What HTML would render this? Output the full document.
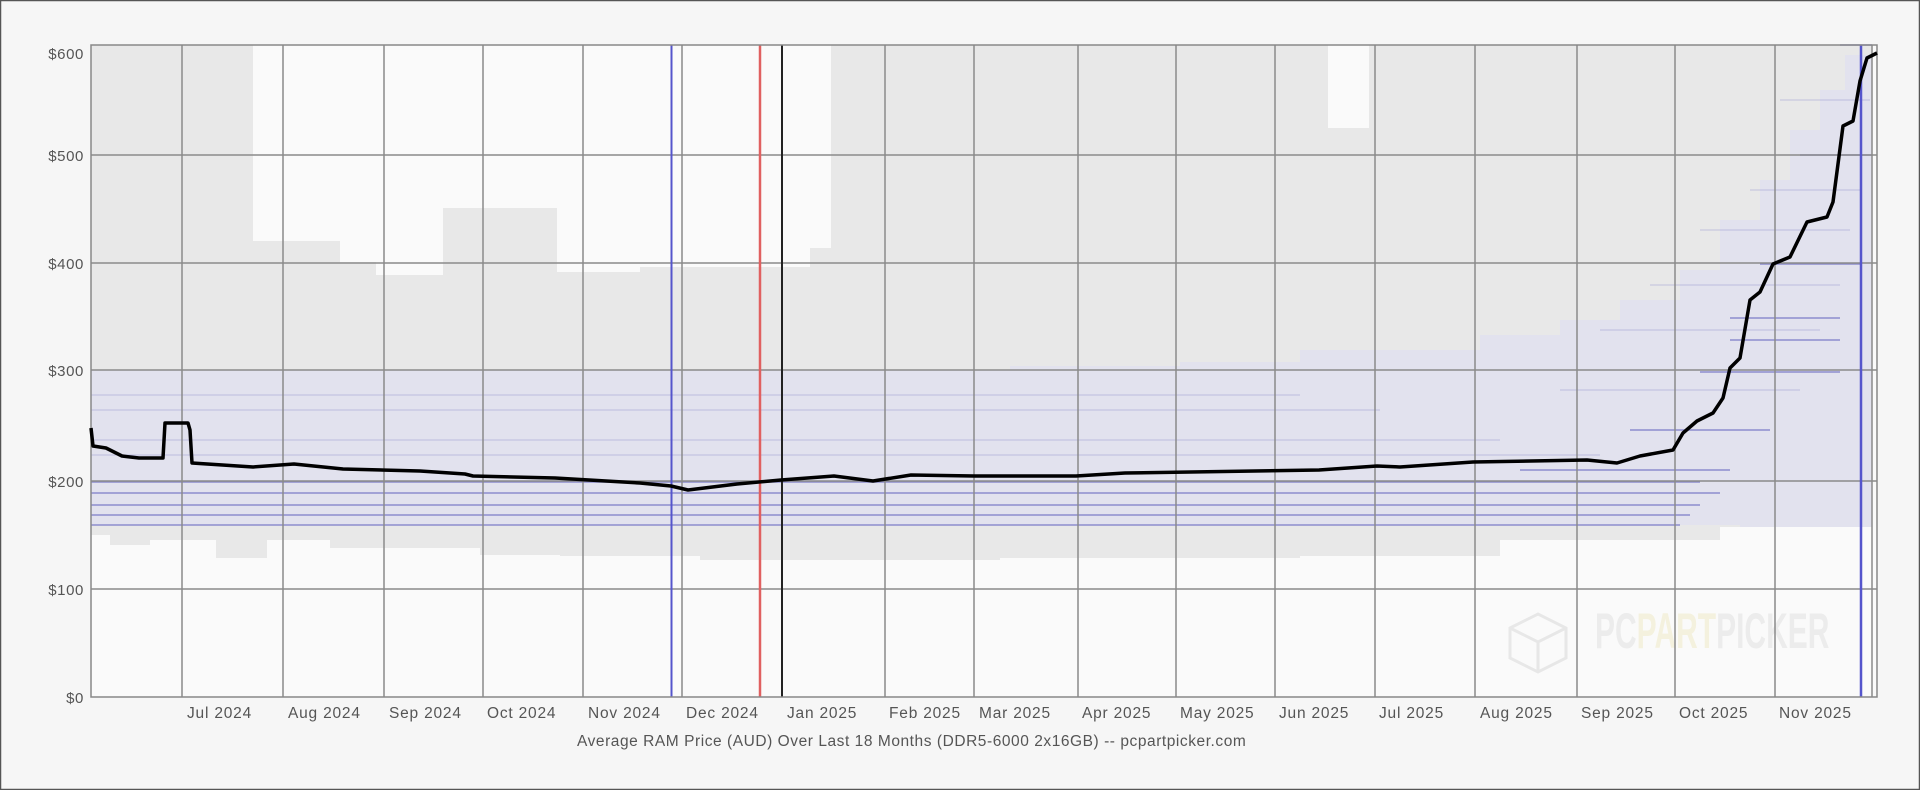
<!DOCTYPE html>
<html><head><meta charset="utf-8"><style>
html,body{margin:0;padding:0;width:1920px;height:790px;overflow:hidden;background:#f6f6f6}
svg{display:block}
text{font-family:"Liberation Sans",sans-serif}
</style></head><body>
<svg width="1920" height="790" viewBox="0 0 1920 790">
<rect x="0.5" y="0.5" width="1919" height="789" fill="#f6f6f6" stroke="#555" stroke-width="1.5"/>
<rect x="91" y="45" width="1786" height="652" fill="#fafafa"/>
<path fill="#e8e8e8" d="M91 45 H253 V241 H340 V262 H376 V275 H443 V208 H557 V272 H640 V267 H810 V248 H831 V45 H1328 V128 H1369 V45 H1872 V527 H1720 V540 H1500 V556 H1300 V558 H1000 V560 H700 V556 H560 V555 H480 V548 H330 V540 H267 V558 H216 V540 H150 V545 H110 V535 H91 Z"/>
<path fill="#e2e2ee" d="M91 370 H1010 V366 H1180 V362 H1300 V350 H1480 V335 H1560 V320 H1620 V300 H1680 V270 H1720 V220 H1760 V180 H1790 V130 H1820 V90 H1845 V55 H1872 V527 H1740 V525 H91 Z"/>
<g stroke="#7070c4" stroke-width="1.5" opacity="0.75">
<line x1="91" y1="482" x2="1700" y2="482"/>
<line x1="91" y1="493" x2="1720" y2="493"/>
<line x1="91" y1="505" x2="1700" y2="505"/>
<line x1="91" y1="515" x2="1690" y2="515"/>
<line x1="91" y1="525" x2="1680" y2="525"/>
<line x1="1520" y1="470" x2="1730" y2="470"/>
<line x1="1630" y1="430" x2="1770" y2="430"/>
<line x1="1700" y1="372" x2="1840" y2="372"/>
<line x1="1730" y1="340" x2="1840" y2="340"/>
<line x1="1730" y1="318" x2="1840" y2="318"/>
<line x1="1760" y1="264" x2="1860" y2="264"/>
<line x1="1800" y1="155" x2="1872" y2="155"/>
<line x1="1840" y1="45" x2="1872" y2="45"/>
</g>
<g stroke="#9898d0" stroke-width="1" opacity="0.5">
<line x1="91" y1="440" x2="1500" y2="440"/>
<line x1="91" y1="410" x2="1380" y2="410"/>
<line x1="91" y1="455" x2="1600" y2="455"/>
<line x1="91" y1="395" x2="1300" y2="395"/>
<line x1="1560" y1="390" x2="1800" y2="390"/>
<line x1="1600" y1="330" x2="1820" y2="330"/>
<line x1="1650" y1="285" x2="1840" y2="285"/>
<line x1="1700" y1="230" x2="1850" y2="230"/>
<line x1="1750" y1="190" x2="1860" y2="190"/>
<line x1="1780" y1="100" x2="1870" y2="100"/>
</g>
<g opacity="0.9">
<path d="M1510 628 l28 -14 28 14 v30 l-28 14 -28 -14z M1510 628 l28 14 28 -14 M1538 642 v30" fill="none" stroke="#e6e6e6" stroke-width="3"/>
<text x="1595" y="648" font-size="50" font-weight="bold" fill="#ebebeb" transform="translate(1595 0) scale(0.6 1) translate(-1595 0)">PC<tspan fill="#f4f1dc">PART</tspan>PICKER</text>
</g>
<g stroke="#8a8a8a" stroke-width="1.5">
<line x1="91" y1="155" x2="1877" y2="155"/>
<line x1="91" y1="263" x2="1877" y2="263"/>
<line x1="91" y1="370" x2="1877" y2="370"/>
<line x1="91" y1="481" x2="1877" y2="481"/>
<line x1="91" y1="589" x2="1877" y2="589"/>
<line x1="182" y1="45" x2="182" y2="697"/>
<line x1="283" y1="45" x2="283" y2="697"/>
<line x1="384" y1="45" x2="384" y2="697"/>
<line x1="483" y1="45" x2="483" y2="697"/>
<line x1="583" y1="45" x2="583" y2="697"/>
<line x1="682" y1="45" x2="682" y2="697"/>
<line x1="885" y1="45" x2="885" y2="697"/>
<line x1="974" y1="45" x2="974" y2="697"/>
<line x1="1078" y1="45" x2="1078" y2="697"/>
<line x1="1176" y1="45" x2="1176" y2="697"/>
<line x1="1275" y1="45" x2="1275" y2="697"/>
<line x1="1375" y1="45" x2="1375" y2="697"/>
<line x1="1475" y1="45" x2="1475" y2="697"/>
<line x1="1577" y1="45" x2="1577" y2="697"/>
<line x1="1675" y1="45" x2="1675" y2="697"/>
<line x1="1775" y1="45" x2="1775" y2="697"/>
<line x1="1872" y1="45" x2="1872" y2="697"/>
</g>
<line x1="671.5" y1="45" x2="671.5" y2="697" stroke="#5555cc" stroke-width="2"/>
<line x1="760" y1="45" x2="760" y2="697" stroke="#e06060" stroke-width="2.5"/>
<line x1="782" y1="45" x2="782" y2="697" stroke="#222" stroke-width="2"/>
<line x1="1861" y1="45" x2="1861" y2="697" stroke="#5555cc" stroke-width="2.5"/>
<rect x="91" y="45" width="1786" height="652" fill="none" stroke="#888" stroke-width="1.5"/>
<polyline fill="none" stroke="#000" stroke-width="3.5" stroke-linejoin="round" points="91,428 93,446 106,448 122,456 139,458 161,458 163,458 165,423 188,423 190,430 192,463 253,467 294,464 343,469 420,471 465,474 473,476 555,478 640,483 671,486 688,490 737,484 781,480 834,476 873,481 911,475 974,476 1076,476 1125,473 1319,470 1377,466 1400,467 1473,462 1587,460 1617,463 1640,456 1673,450 1683,433 1697,421 1713,413 1723,398 1730,368 1740,358 1750,300 1760,292 1773,264 1790,257 1807,222 1827,217 1833,202 1843,126 1853,121 1860,81 1867,58 1877,53"/>
<g font-size="15" fill="#555" text-anchor="end" letter-spacing="0.6">
<text x="84" y="59">$600</text>
<text x="84" y="161">$500</text>
<text x="84" y="269">$400</text>
<text x="84" y="376">$300</text>
<text x="84" y="487">$200</text>
<text x="84" y="595">$100</text>
<text x="84" y="703">$0</text>
</g>
<g font-size="15.5" fill="#555" letter-spacing="0.8">
<text x="187" y="718">Jul 2024</text>
<text x="288" y="718">Aug 2024</text>
<text x="389" y="718">Sep 2024</text>
<text x="487" y="718">Oct 2024</text>
<text x="588" y="718">Nov 2024</text>
<text x="686" y="718">Dec 2024</text>
<text x="787" y="718">Jan 2025</text>
<text x="889" y="718">Feb 2025</text>
<text x="979" y="718">Mar 2025</text>
<text x="1082" y="718">Apr 2025</text>
<text x="1180" y="718">May 2025</text>
<text x="1279" y="718">Jun 2025</text>
<text x="1379" y="718">Jul 2025</text>
<text x="1480" y="718">Aug 2025</text>
<text x="1581" y="718">Sep 2025</text>
<text x="1679" y="718">Oct 2025</text>
<text x="1779" y="718">Nov 2025</text>
</g>
<text x="577" y="746" font-size="15.5" fill="#555" letter-spacing="0.55">Average RAM Price (AUD) Over Last 18 Months (DDR5-6000 2x16GB) -- pcpartpicker.com</text>
</svg>
</body></html>
